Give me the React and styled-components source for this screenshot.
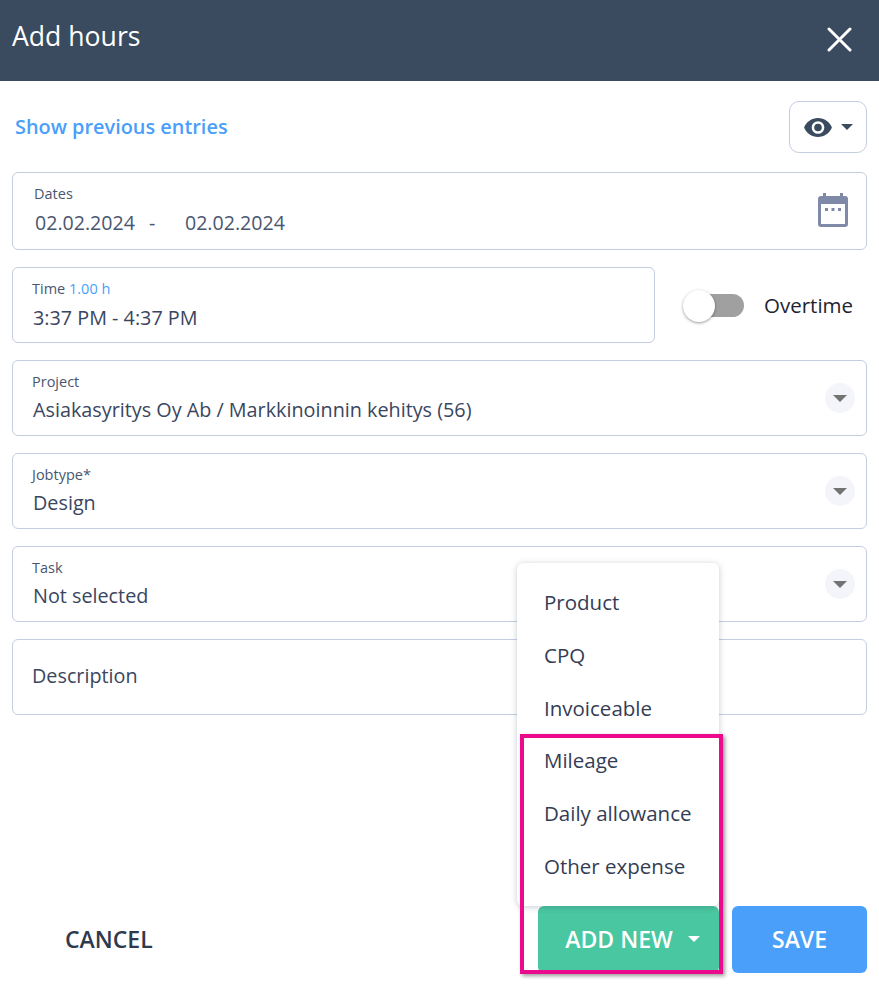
import styled, { createGlobalStyle } from 'styled-components';

const Global = createGlobalStyle`
  html, body { margin: 0; padding: 0; background: #fff; }
  body { font-family: 'Open Sans', 'Noto Sans', sans-serif; color: #3a4660; }
  * { box-sizing: border-box; }
`;

const Page = styled.div`
  position: relative;
  width: 879px;
  height: 984px;
  overflow: hidden;
  display: flex;
  flex-direction: column;
`;

const Header = styled.header`
  height: 81px;
  flex: none;
  background: #3a4b60;
  color: #fff;
  display: flex;
  align-items: center;
  justify-content: space-between;
  padding: 0 27px 10px 12px;
  font-size: 26.6px;
`;

const CloseBtn = styled.svg`
  width: 25px;
  height: 25px;
  margin-top: 8px;
`;

const Body = styled.div`
  flex: 1;
  display: flex;
  flex-direction: column;
  padding: 20px 12px 11px;
`;

const TopRow = styled.div`
  display: flex;
  align-items: center;
  justify-content: space-between;
  padding-left: 3px;
  margin-bottom: 19px;
`;

const PrevLink = styled.a`
  color: #4a9ffa;
  font-size: 19.9px;
  font-weight: 600;
  margin-top: -2px;
`;

const EyeButton = styled.div`
  width: 78px;
  height: 52px;
  border: 1px solid #c5cde0;
  border-radius: 10px;
  display: flex;
  align-items: center;
  justify-content: center;
  gap: 9px;
`;

const Caret = styled.span`
  width: 0;
  height: 0;
  border-left: ${({ size }) => size}px solid transparent;
  border-right: ${({ size }) => size}px solid transparent;
  border-top: ${({ size }) => size}px solid ${({ color }) => color};
`;

const Form = styled.div`
  display: flex;
  flex-direction: column;
  gap: 17px;
`;

const Field = styled.div`
  position: relative;
  flex: ${({ grow }) => (grow ? 1 : 'none')};
  height: ${({ h }) => h}px;
  border: 1px solid #c5cde0;
  border-radius: 6px;
  padding: ${({ pad }) => pad || '10px 20px'};
  display: flex;
  flex-direction: column;
  justify-content: ${({ center }) => (center ? 'center' : 'flex-start')};
`;

const Label = styled.div`
  font-size: 14.5px;
  line-height: 20px;
  color: #4a5670;
`;

const Hours = styled.span`
  color: #4a9ffa;
  font-weight: 500;
`;

const Value = styled.div`
  font-size: 19.8px;
  line-height: 28px;
  color: #3a4660;
  white-space: pre;
  margin-top: ${({ top }) => top || 0}px;
  margin-left: ${({ left }) => left || 0}px;
`;

const DateRow = styled.div`
  display: flex;
  font-size: 19.6px;
  line-height: 28px;
  margin: 5px 0 0 1px;
  color: #4a5670;
`;

const Dash = styled.span`
  width: 50px;
  padding-left: 14px;
`;

const CalendarIcon = styled.svg`
  position: absolute;
  right: 18px;
  top: 20px;
  width: 30px;
  height: 34px;
`;

const Row = styled.div`
  display: flex;
  align-items: center;
`;

const SwitchWrap = styled.div`
  flex: none;
  width: 212px;
  display: flex;
  align-items: center;
  padding-left: 27px;
  gap: 20px;
`;

const Track = styled.div`
  position: relative;
  width: 61px;
  height: 23px;
  margin-left: 1px;
`;

const Bar = styled.div`
  position: absolute;
  left: 12px;
  right: 0;
  top: 0;
  bottom: 0;
  background: #a0a0a0;
  border-radius: 12px;
`;

const Knob = styled.div`
  position: absolute;
  left: 0;
  top: -4px;
  width: 32px;
  height: 32px;
  border-radius: 50%;
  background: #fff;
  box-shadow: 0 1px 3px rgba(0, 0, 0, 0.4);
`;

const SwitchLabel = styled.span`
  font-size: 20.5px;
  font-weight: 500;
  color: #1d2430;
`;

const SelectCaret = styled.div`
  position: absolute;
  right: 11px;
  top: 22px;
  width: 30px;
  height: 30px;
  border-radius: 50%;
  background: #f4f5fa;
  display: flex;
  align-items: center;
  justify-content: center;
`;

const Footer = styled.div`
  margin-top: auto;
  display: flex;
  align-items: center;
  gap: 13px;
`;

const Cancel = styled.div`
  margin-right: auto;
  margin-left: 53px;
  padding-bottom: 2px;
  font-size: 23px;
  font-weight: 600;
  color: #2f3a4e;
`;

const Button = styled.div`
  height: 67px;
  width: ${({ w }) => w}px;
  padding-left: ${({ shift }) => shift || 0}px;
  padding-bottom: 1px;
  background: ${({ bg }) => bg};
  color: #fff;
  border-radius: 6px;
  font-size: 23px;
  font-weight: 600;
  display: flex;
  align-items: center;
  justify-content: center;
  gap: 15px;
`;

const Menu = styled.div`
  position: absolute;
  left: 517px;
  top: 563px;
  width: 202px;
  height: 343px;
  background: #fff;
  border-radius: 6px;
  box-shadow: 0 1px 6px rgba(60, 70, 100, 0.28);
  padding-top: 13px;
`;

const MenuItem = styled.div`
  height: 52.8px;
  line-height: 52.8px;
  padding-left: 27px;
  font-size: 20.5px;
  font-weight: 500;
  color: #333d55;
`;

const Highlight = styled.div`
  position: absolute;
  left: 520px;
  top: 734px;
  width: 203px;
  height: 240px;
  border: 4px solid #ec0a8c;
  box-shadow: 2px 2px 4px rgba(0, 0, 0, 0.4);
  pointer-events: none;
`;

const SelectField = ({ label, value }) => (
  <Field h={76} pad="11px 19px">
    <Label>{label}</Label>
    <Value top={4} left={1}>
      {value}
    </Value>
    <SelectCaret>
      <Caret size={7} color="#737373" />
    </SelectCaret>
  </Field>
);

export default function App() {
  return (
    <Page>
      <Global />
      <Header>
        <span>Add hours</span>
        <CloseBtn viewBox="0 0 25 25">
          <path d="M2 2 L23 23 M23 2 L2 23" stroke="#fff" strokeWidth="3" strokeLinecap="round" />
        </CloseBtn>
      </Header>
      <Body>
        <TopRow>
          <PrevLink>Show previous entries</PrevLink>
          <EyeButton>
            <svg width="28" height="19" viewBox="0 0 22 15">
              <path
                fill="#3a4b60"
                d="M11 0C6 0 1.7 3.1 0 7.500 1.700 11.900 6 15 11 15s9.300-3.100 11-7.500C20.300 3.100 16 0 11 0zm0 12.500a5 5 0 1 1 0-10 5 5 0 0 1 0 10zm0-8a3 3 0 1 0 0 6 3 3 0 0 0 0-6z"
              />
            </svg>
            <Caret size={6} color="#3a4b60" />
          </EyeButton>
        </TopRow>
        <Form>
          <Field h={78} pad="11px 21px">
            <Label>Dates</Label>
            <DateRow>
              <span>02.02.2024</span>
              <Dash>-</Dash>
              <span>02.02.2024</span>
            </DateRow>
            <CalendarIcon viewBox="0 0 30 34">
              <path
                fill="#7f8aa8"
                d="M5 0h3v3h14V0h3v3h2a3 3 0 0 1 3 3v25a3 3 0 0 1-3 3H3a3 3 0 0 1-3-3V6a3 3 0 0 1 3-3h2zM3 11v20h24V11z"
              />
              <path fill="#7f8aa8" d="M7 15h3v3H7zM13.500 15h3v3h-3zM20 15h3v3h-3z" />
            </CalendarIcon>
          </Field>
          <Row>
            <Field grow h={76} pad="11px 19px">
              <Label>
                Time <Hours>1.00 h</Hours>
              </Label>
              <Value top={5} left={1}>
                3:37 PM - 4:37 PM
              </Value>
            </Field>
            <SwitchWrap>
              <Track>
                <Bar />
                <Knob />
              </Track>
              <SwitchLabel>Overtime</SwitchLabel>
            </SwitchWrap>
          </Row>
          <SelectField label="Project" value="Asiakasyritys Oy Ab / Markkinoinnin kehitys (56)" />
          <SelectField label="Jobtype*" value="Design" />
          <SelectField label="Task" value="Not selected" />
          <Field h={76} center pad="0 19px 2px">
            <Value>Description</Value>
          </Field>
        </Form>
        <Footer>
          <Cancel>CANCEL</Cancel>
          <Button w={181} bg="#48c7a0" shift={8}>
            ADD NEW
            <Caret size={6} color="#fff" />
          </Button>
          <Button w={135} bg="#4a9ffa">
            SAVE
          </Button>
        </Footer>
      </Body>
      <Menu>
        {['Product', 'CPQ', 'Invoiceable', 'Mileage', 'Daily allowance', 'Other expense'].map((item) => (
          <MenuItem key={item}>{item}</MenuItem>
        ))}
      </Menu>
      <Highlight />
    </Page>
  );
}
